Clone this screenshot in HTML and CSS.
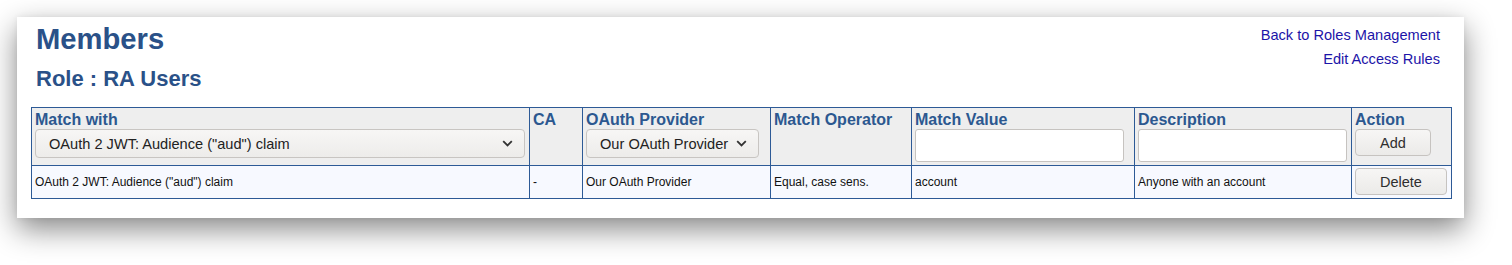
FILE: index.html
```html
<!DOCTYPE html>
<html>
<head>
<meta charset="utf-8">
<title>Members</title>
<link rel="stylesheet" href="styles.css">
</head>
<body>
<div class="page">
  <div class="card">
    <div class="top">
      <div class="titles">
        <h1 class="title">Members</h1>
        <h2 class="subtitle">Role : RA Users</h2>
      </div>
      <div class="links">
        <a class="link" href="#">Back to Roles Management</a>
        <a class="link" href="#">Edit Access Rules</a>
      </div>
    </div>
    <table class="grid">
      <colgroup>
        <col class="w-match">
        <col class="w-ca">
        <col class="w-prov">
        <col class="w-op">
        <col class="w-val">
        <col class="w-desc">
        <col class="w-act">
      </colgroup>
      <thead>
        <tr>
          <th>
            <div class="lbl">Match with</div>
            <span class="sel sel-full">
              <select class="select select-full"><option>OAuth 2 JWT: Audience ("aud") claim</option></select>
              <svg class="chev" width="11" height="7" viewBox="0 0 11 7"><path d="M1.2 1.2 L5.5 5.5 L9.8 1.2" fill="none" stroke="#333" stroke-width="1.8"/></svg>
            </span>
          </th>
          <th><div class="lbl">CA</div></th>
          <th>
            <div class="lbl">OAuth Provider</div>
            <span class="sel">
              <select class="select select-auto"><option>Our OAuth Provider</option></select>
              <svg class="chev" width="11" height="7" viewBox="0 0 11 7"><path d="M1.2 1.2 L5.5 5.5 L9.8 1.2" fill="none" stroke="#333" stroke-width="1.8"/></svg>
            </span>
          </th>
          <th><div class="lbl">Match Operator</div></th>
          <th>
            <div class="lbl">Match Value</div>
            <input class="field" type="text">
          </th>
          <th>
            <div class="lbl">Description</div>
            <input class="field" type="text">
          </th>
          <th>
            <div class="lbl">Action</div>
            <button class="btn" type="button">Add</button>
          </th>
        </tr>
      </thead>
      <tbody>
        <tr>
          <td>OAuth 2 JWT: Audience ("aud") claim</td>
          <td>-</td>
          <td>Our OAuth Provider</td>
          <td>Equal, case sens.</td>
          <td>account</td>
          <td>Anyone with an account</td>
          <td><button class="btn" type="button">Delete</button></td>
        </tr>
      </tbody>
    </table>
  </div>
</div>
</body>
</html>
```

FILE: styles.css
```css
html, body {
  margin: 0;
  padding: 0;
  background: #ffffff;
}

body {
  font-family: "Liberation Sans", Arial, sans-serif;
  color: #111;
}

.page {
  padding: 17px;
  min-height: 265px;
  box-sizing: border-box;
}

.card {
  width: 1447px;
  box-sizing: border-box;
  background: #ffffff;
  padding: 6px 14px 19px 14px;
  box-shadow: 0 11px 28px rgba(0, 0, 0, 0.47), 0 0 6px rgba(0, 0, 0, 0.06);
}

.top {
  display: flex;
  justify-content: space-between;
  align-items: flex-start;
  padding: 0 10px 0 5px;
}

.title {
  margin: 0;
  font-size: 29.2px;
  line-height: 33px;
  font-weight: bold;
  color: #2a5188;
}

.subtitle {
  margin: 11px 0 0 0;
  font-size: 22px;
  line-height: 24px;
  font-weight: bold;
  color: #2a5188;
}

.links {
  display: flex;
  flex-direction: column;
  align-items: flex-end;
}

.link {
  font-size: 14.6px;
  line-height: 24px;
  color: #1c14a8;
  text-decoration: none;
}

.grid {
  margin-top: 16px;
  border-collapse: collapse;
  table-layout: fixed;
  width: 1420px;
}

.w-match { width: 498px; }
.w-ca { width: 53px; }
.w-prov { width: 188px; }
.w-op { width: 141px; }
.w-val { width: 223px; }
.w-desc { width: 217px; }
.w-act { width: 100px; }

.grid th,
.grid td {
  border: 1px solid #2d5a96;
  padding: 2px 3px;
  text-align: left;
}

.grid th {
  background: #eeeeee;
  vertical-align: top;
  font-size: 16px;
  font-weight: bold;
  color: #2c5890;
  padding-bottom: 3px;
}

.grid td {
  background: #f7f9ff;
  vertical-align: middle;
  font-size: 12px;
  line-height: 14px;
  color: #111;
  padding-bottom: 3px;
}

.lbl {
  line-height: 19px;
  white-space: nowrap;
}

.sel {
  position: relative;
  display: inline-block;
  vertical-align: top;
}

.sel-full {
  display: block;
  width: 490px;
}

.select {
  -webkit-appearance: none;
  appearance: none;
  display: block;
  box-sizing: border-box;
  height: 29px;
  margin: 0;
  border: 1px solid #c8c5c2;
  border-radius: 4px;
  background: linear-gradient(#f7f6f5, #edecea);
  font-family: "Liberation Sans", Arial, sans-serif;
  font-size: 14.6px;
  font-weight: normal;
  color: #222;
  padding: 0 29px 0 13px;
}

.select-full {
  width: 490px;
}

.chev {
  position: absolute;
  right: 12px;
  top: 11px;
  pointer-events: none;
}

.field {
  display: block;
  box-sizing: border-box;
  width: 209px;
  height: 33px;
  margin: 0;
  border: 1px solid #c6c3c0;
  border-radius: 3px;
  background: #ffffff;
  padding: 0 6px;
  font-family: "Liberation Sans", Arial, sans-serif;
  font-size: 14.5px;
}

.btn {
  display: block;
  box-sizing: border-box;
  height: 27px;
  margin: 0;
  padding: 0 24px;
  border: 1px solid #c6c3c0;
  border-radius: 4px;
  background: linear-gradient(#f7f6f5, #ebeae8);
  font-family: "Liberation Sans", Arial, sans-serif;
  font-size: 14.5px;
  font-weight: normal;
  color: #2e2e2e;
  line-height: 26px;
}
```
